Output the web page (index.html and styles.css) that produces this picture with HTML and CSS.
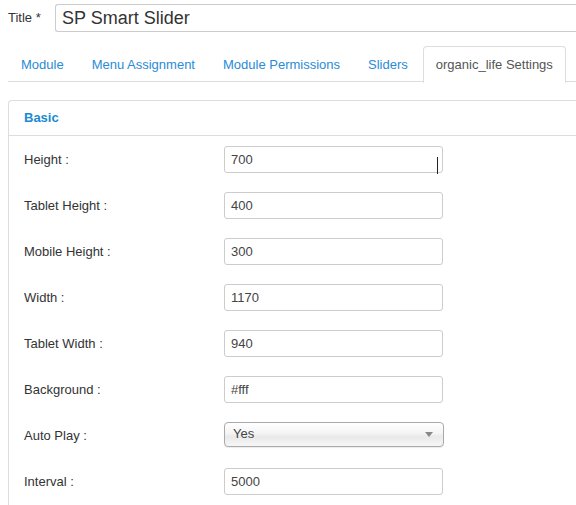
FILE: index.html
```html
<!DOCTYPE html>
<html>
<head>
<meta charset="utf-8">
<link rel="stylesheet" href="styles.css">
</head>
<body>
<div class="page">
  <div class="title-row">
    <label class="title-label">Title *</label>
    <div class="title-input">SP Smart Slider</div>
  </div>
  <ul class="tabs">
    <li class="tab">Module</li>
    <li class="tab">Menu Assignment</li>
    <li class="tab">Module Permissions</li>
    <li class="tab">Sliders</li>
    <li class="tab active">organic_life Settings</li>
  </ul>
  <div class="panel">
    <div class="panel-head">Basic</div>
    <div class="panel-body">
      <div class="row"><span class="lbl">Height :</span><div class="field">700<span class="ibeam"></span></div></div>
      <div class="row"><span class="lbl">Tablet Height :</span><div class="field">400</div></div>
      <div class="row"><span class="lbl">Mobile Height :</span><div class="field">300</div></div>
      <div class="row"><span class="lbl">Width :</span><div class="field">1170</div></div>
      <div class="row"><span class="lbl">Tablet Width :</span><div class="field">940</div></div>
      <div class="row"><span class="lbl">Background :</span><div class="field">#fff</div></div>
      <div class="row"><span class="lbl">Auto Play :</span><div class="select">Yes<span class="arrow"></span></div></div>
      <div class="row"><span class="lbl">Interval :</span><div class="field">5000</div></div>
    </div>
  </div>
</div>
</body>
</html>
```

FILE: styles.css
```css
html, body {
  margin: 0;
  padding: 0;
  background: #fff;
}
body {
  font-family: "Liberation Sans", Arial, sans-serif;
  font-size: 13px;
  color: #333;
  width: 576px;
  height: 505px;
  overflow: hidden;
}
.page {
  padding-left: 8px;
}
.title-row {
  display: flex;
  align-items: center;
  padding-top: 4px;
  height: 28px;
}
.title-label {
  width: 47px;
  margin-top: -2px;
}
.title-input {
  flex: 1;
  height: 26px;
  border: 1px solid #ccc;
  border-right: none;
  border-radius: 3px 0 0 3px;
  font-size: 18px;
  line-height: 26px;
  padding-left: 6px;
  color: #333;
}
.tabs {
  list-style: none;
  margin: 14px 0 0 0;
  padding: 0;
  display: flex;
  border-bottom: 1px solid #ddd;
  height: 35px;
}
.tab {
  padding: 9px 12px 8px;
  line-height: 17px;
  margin-right: 2px;
  color: #2a8bd6;
  border: 1px solid transparent;
  border-radius: 4px 4px 0 0;
  height: 17px;
}
.tab.active {
  color: #555;
  border-color: #ddd;
  border-bottom-color: #fff;
  background: #fff;
  height: 18px;
}
.panel {
  margin-top: 18px;
  border: 1px solid #ddd;
  border-right: none;
  border-radius: 4px 0 0 4px;
  height: 420px;
}
.panel-head {
  height: 34px;
  line-height: 34px;
  padding-left: 15px;
  font-weight: bold;
  color: #1a8ad4;
  border-bottom: 1px solid #ddd;
}
.panel-body {
  padding: 10px 15px 0;
}
.row {
  display: flex;
  align-items: center;
  height: 27px;
  margin-bottom: 19px;
}
.lbl {
  width: 200px;
  flex: none;
}
.field {
  position: relative;
  width: 205px;
  height: 25px;
  line-height: 25px;
  padding: 0 6px;
  border: 1px solid #ccc;
  border-radius: 3px;
  color: #444;
}
.ibeam {
  position: absolute;
  left: 212px;
  top: 10px;
  width: 1px;
  height: 17px;
  background: #222;
}
.select {
  position: relative;
  width: 205px;
  height: 23px;
  line-height: 22px;
  padding: 0 5px 0 8px;
  border: 1px solid #aaa;
  border-radius: 4px;
  background: linear-gradient(#ffffff 0%, #f4f4f4 45%, #e9e9e9 60%, #f6f6f6 100%);
  box-shadow: 0 1px 1px rgba(0,0,0,0.08);
  color: #444;
  margin-top: -3px;
}
.arrow {
  position: absolute;
  right: 10px;
  top: 9px;
  width: 0;
  height: 0;
  border-left: 4px solid transparent;
  border-right: 4px solid transparent;
  border-top: 5px solid #888;
}
```
